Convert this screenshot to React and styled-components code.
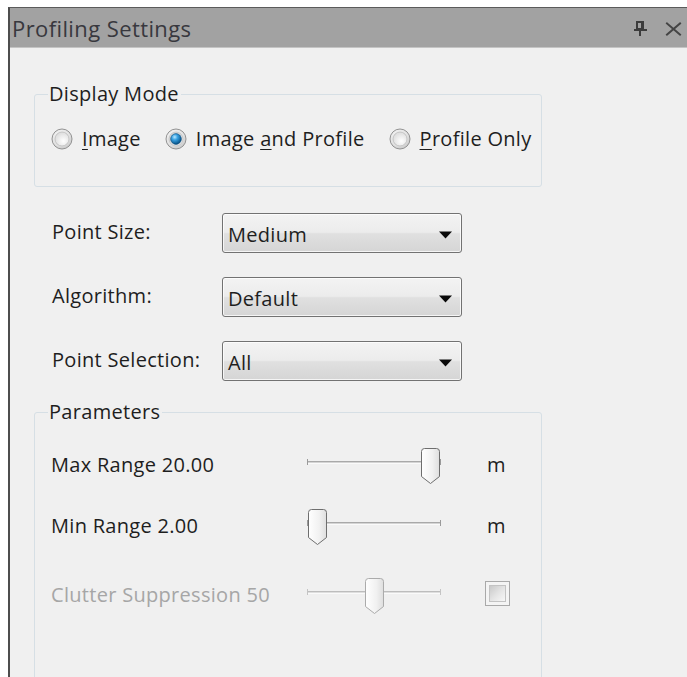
import React, { useId } from "react";
import styled, { createGlobalStyle } from "styled-components";

const GlobalStyle = createGlobalStyle`
  html, body {
    margin: 0;
    background: #ffffff;
    overflow: hidden;
  }
  body {
    font-family: "Open Sans", "Noto Sans", "DejaVu Sans", sans-serif;
    font-size: 20px;
    letter-spacing: 0.3px;
    color: #1e1e1e;
  }
`;

const Frame = styled.div`
  margin: 7px 0 0 8px;
  height: 670px;
  border-top: 1px solid #5b5b5b;
  border-left: 2px solid #4d4d4d;
  background: #f0f0f0;
  display: flex;
  flex-direction: column;
`;

const TitleBar = styled.div`
  height: 39px;
  flex: none;
  background: #a2a2a2;
  border-bottom: 1px solid #c4c4c4;
  display: flex;
  align-items: center;
  justify-content: space-between;
  padding: 0 5px 0 2px;
`;

const Title = styled.span`
  color: #38383e;
  font-size: 22px;
  letter-spacing: 0.4px;
`;

const TitleButtons = styled.div`
  display: flex;
  align-items: center;
  gap: 17px;
  padding-top: 2px;
`;

const Body = styled.div`
  padding-left: 24px;
  display: flex;
  flex-direction: column;
`;

const GroupBox = styled.fieldset`
  margin: ${(p) => p.$top}px 0 0 0;
  padding: 0;
  width: 508px;
  min-width: 0;
  box-sizing: border-box;
  border: 1px solid #d6dfe5;
  border-radius: 3px;
  ${(p) => (p.$height ? `height: ${p.$height}px;` : "")}
`;

const Legend = styled.legend`
  margin-left: 13px;
  padding: 0 2px 0 1px;
  line-height: 22px;
  color: #1e1e1e;
`;

const RadioRow = styled.div`
  display: flex;
  align-items: center;
  gap: 24px;
  padding: 22px 0 35px 16px;
`;

const RadioOption = styled.label`
  display: flex;
  align-items: center;
  gap: 9px;
  line-height: 24px;
`;

const Key = styled.span`
  text-decoration: underline;
  text-underline-offset: 3px;
  text-decoration-thickness: 1px;
`;

const FormGrid = styled.div`
  margin-top: 26px;
  padding-left: 18px;
  display: grid;
  grid-template-columns: 170px 240px;
  row-gap: 24px;
  align-items: center;
`;

const FieldLabel = styled.span`
  line-height: 24px;
  margin-top: -3px;
`;

const Combo = styled.div`
  height: 40px;
  box-sizing: border-box;
  border: 1px solid #727272;
  border-radius: 3px;
  background: linear-gradient(#f3f3f3 0%, #ececec 48%, #e0e0e0 52%, #d5d5d5 100%);
  box-shadow: inset 0 0 0 1px rgba(255, 255, 255, 0.75);
  display: flex;
  align-items: center;
  justify-content: space-between;
  padding: 3px 9px 0 5px;
`;

const ParamList = styled.div`
  padding: 22px 0 0 16px;
  display: flex;
  flex-direction: column;
`;

const ParamRow = styled.div`
  display: grid;
  grid-template-columns: 256px 134px 44px auto;
  height: 40px;
  align-items: center;
  margin-top: ${(p) => p.$gap || 0}px;
`;

const ParamLabel = styled.span`
  line-height: 24px;
  color: ${(p) => (p.$disabled ? "#a6a6a6" : "#1e1e1e")};
`;

const Unit = styled.span`
  grid-column: 4;
  line-height: 24px;
  padding-left: 2px;
`;

const SliderBox = styled.div`
  position: relative;
  height: 40px;
`;

const Track = styled.div`
  position: relative;
  margin-top: 16px;
  height: 1px;
  border-top: 1px solid ${(p) => (p.$disabled ? "#bdbdbd" : "#a9a9a9")};
  border-bottom: 1px solid #fafafa;
  background: ${(p) => (p.$disabled ? "#dedede" : "#d4d4d4")};

  &::before,
  &::after {
    content: "";
    position: absolute;
    top: -3px;
    width: 1px;
    height: 6px;
    background: ${(p) => (p.$disabled ? "#c4c4c4" : "#9a9a9a")};
  }
  &::before { left: 0; }
  &::after { right: 0; }
`;

const Thumb = styled.svg`
  position: absolute;
  top: 2px;
`;

const CheckBox = styled.div`
  grid-column: 4;
  width: 25px;
  height: 25px;
  margin-top: -4px;
  box-sizing: border-box;
  border: 1px solid ${(p) => (p.$disabled ? "#a9a9a9" : "#8e8f8f")};
  background: #f4f4f4;
  padding: 3px;

  &::after {
    content: "";
    display: block;
    width: 100%;
    height: 100%;
    box-sizing: border-box;
    border: 1px solid #c3c3c3;
    background: linear-gradient(135deg, #c9c9c9 0%, #e6e6e6 55%, #f7f7f7 100%);
  }
`;

function PinIcon() {
  return (
    <svg width="15" height="16" viewBox="0 0 15 16">
      <g stroke="#3c3c3c" strokeWidth="1.4" fill="none" shapeRendering="crispEdges">
        <rect x="4" y="1" width="6" height="7" />
        <line x1="9" y1="1" x2="9" y2="8" />
        <line x1="1" y1="9" x2="14" y2="9" />
        <line x1="7" y1="9" x2="7" y2="15" />
      </g>
    </svg>
  );
}

function CloseIcon() {
  return (
    <svg width="17" height="14" viewBox="0 0 17 14">
      <g stroke="#444444" strokeWidth="2" strokeLinecap="square">
        <line x1="2" y1="1.5" x2="15" y2="12.5" />
        <line x1="15" y1="1.5" x2="2" y2="12.5" />
      </g>
    </svg>
  );
}

function RadioMark({ checked }) {
  const id = useId().replace(/:/g, "");
  return (
    <svg width="22" height="22" viewBox="0 0 22 22">
      <defs>
        <radialGradient id={`${id}o`} cx="0.4" cy="0.35" r="0.7">
          <stop offset="0" stopColor="#fbfbfb" />
          <stop offset="0.7" stopColor="#e0e0e0" />
          <stop offset="1" stopColor="#c4c4c4" />
        </radialGradient>
        <radialGradient id={`${id}i`} cx="0.6" cy="0.65" r="0.7">
          <stop offset="0" stopColor="#ffffff" />
          <stop offset="1" stopColor="#dadada" />
        </radialGradient>
        <radialGradient id={`${id}d`} cx="0.38" cy="0.32" r="0.75">
          <stop offset="0" stopColor="#b8e8ff" />
          <stop offset="0.35" stopColor="#3aa3e3" />
          <stop offset="0.8" stopColor="#0e5f96" />
          <stop offset="1" stopColor="#0a4470" />
        </radialGradient>
      </defs>
      <circle cx="11" cy="11" r="10" fill={`url(#${id}o)`} stroke="#939393" strokeWidth="1" />
      <circle cx="11" cy="11" r="7" fill={`url(#${id}i)`} stroke="#bdbdbd" strokeWidth="0.8" />
      {checked && (
        <circle cx="11" cy="11" r="5.4" fill={`url(#${id}d)`} stroke="#0b4a78" strokeWidth="0.6" />
      )}
    </svg>
  );
}

function DropArrow() {
  return (
    <svg width="13" height="8" viewBox="0 0 13 8">
      <path d="M0 0.5 H13 L6.5 7.5 Z" fill="#0a0a0a" />
    </svg>
  );
}

function Radio({ checked, children }) {
  return (
    <RadioOption>
      <RadioMark checked={checked} />
      <span>{children}</span>
    </RadioOption>
  );
}

function ComboBox({ value }) {
  return (
    <Combo>
      <span>{value}</span>
      <DropArrow />
    </Combo>
  );
}

const TRACK_WIDTH = 134;
const THUMB_WIDTH = 21;

function Slider({ value, min, max, disabled }) {
  const id = useId().replace(/:/g, "");
  const left = ((value - min) / (max - min)) * (TRACK_WIDTH - THUMB_WIDTH);
  const edge = disabled ? "#ababab" : "#6e6e6e";
  return (
    <SliderBox>
      <Track $disabled={disabled} />
      <Thumb width="21" height="38" viewBox="0 0 21 38" style={{ left }}>
        <defs>
          <linearGradient id={`${id}g`} x1="0" y1="0" x2="1" y2="0">
            <stop offset="0" stopColor="#ffffff" />
            <stop offset="0.6" stopColor="#f1f1f1" />
            <stop offset="1" stopColor="#dedede" />
          </linearGradient>
        </defs>
        <path
          d="M1.5 4.5 Q1.5 1.5 4.5 1.5 H16.5 Q19.5 1.5 19.5 4.5 V29.5 L10.5 36.5 L1.5 29.5 Z"
          fill={`url(#${id}g)`}
          stroke={edge}
          strokeWidth="1"
        />
      </Thumb>
    </SliderBox>
  );
}

export default function App() {
  return (
    <>
      <GlobalStyle />
      <Frame>
        <TitleBar>
          <Title>Profiling Settings</Title>
          <TitleButtons>
            <PinIcon />
            <CloseIcon />
          </TitleButtons>
        </TitleBar>

        <Body>
          <GroupBox $top={35}>
            <Legend>Display Mode</Legend>
            <RadioRow>
              <Radio>
                <Key>I</Key>mage
              </Radio>
              <Radio checked>
                Image <Key>a</Key>nd Profile
              </Radio>
              <Radio>
                <Key>P</Key>rofile Only
              </Radio>
            </RadioRow>
          </GroupBox>

          <FormGrid>
            <FieldLabel>Point Size:</FieldLabel>
            <ComboBox value="Medium" />
            <FieldLabel>Algorithm:</FieldLabel>
            <ComboBox value="Default" />
            <FieldLabel>Point Selection:</FieldLabel>
            <ComboBox value="All" />
          </FormGrid>

          <GroupBox $top={20} $height={320}>
            <Legend>Parameters</Legend>
            <ParamList>
              <ParamRow>
                <ParamLabel>Max Range 20.00</ParamLabel>
                <Slider value={20} min={2} max={20} />
                <Unit>m</Unit>
              </ParamRow>

              <ParamRow $gap={21}>
                <ParamLabel>Min Range 2.00</ParamLabel>
                <Slider value={2} min={2} max={20} />
                <Unit>m</Unit>
              </ParamRow>

              <ParamRow $gap={29}>
                <ParamLabel $disabled>Clutter Suppression 50</ParamLabel>
                <Slider value={50} min={0} max={100} disabled />
                <CheckBox $disabled />
              </ParamRow>
            </ParamList>
          </GroupBox>
        </Body>
      </Frame>
    </>
  );
}
